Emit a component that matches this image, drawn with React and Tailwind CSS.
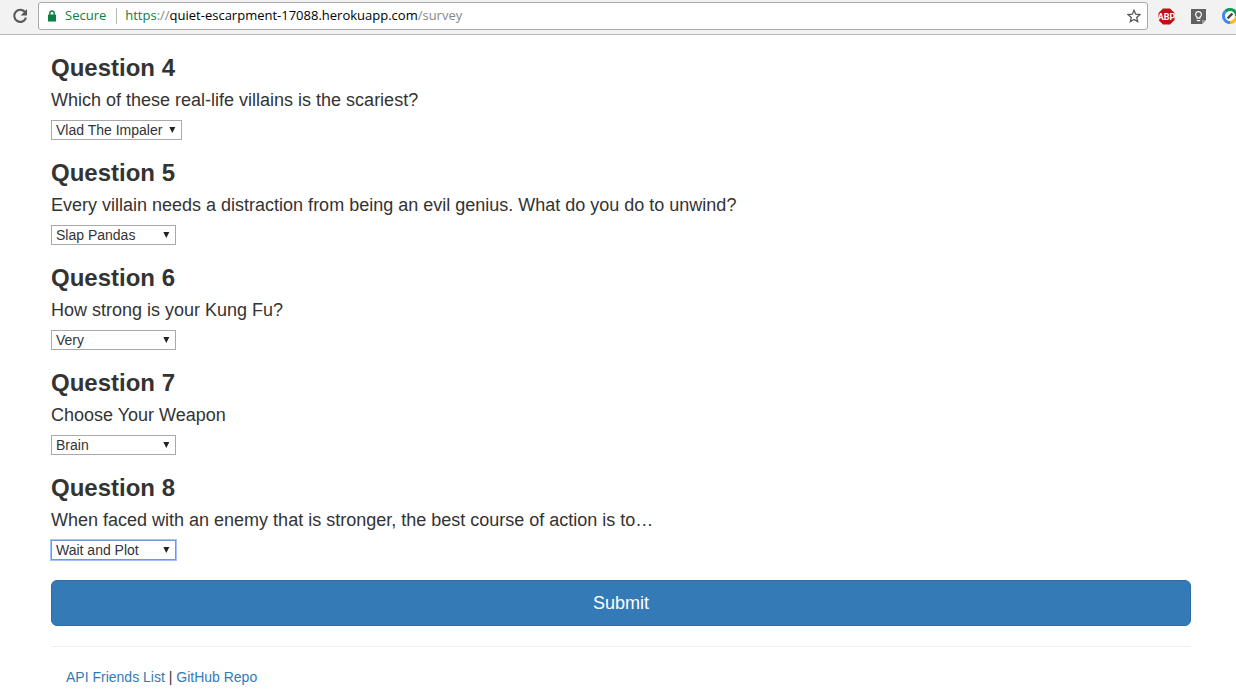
import React from "react";

const questions = [
  { n: 4, text: "Which of these real-life villains is the scariest?", answer: "Vlad The Impaler", width: "w-[131px]" },
  { n: 5, text: "Every villain needs a distraction from being an evil genius. What do you do to unwind?", answer: "Slap Pandas", width: "w-[125px]" },
  { n: 6, text: "How strong is your Kung Fu?", answer: "Very", width: "w-[125px]" },
  { n: 7, text: "Choose Your Weapon", answer: "Brain", width: "w-[125px]" },
  { n: 8, text: "When faced with an enemy that is stronger, the best course of action is to…", answer: "Wait and Plot", width: "w-[125px]", active: true },
];

function BrowserBar() {
  return (
    <header className="flex h-[35px] items-start overflow-hidden border-b border-[#b6b6b6] bg-[#f2f2f2] pt-[2px] pl-3 font-['Open_Sans',sans-serif] text-[13px]">
      <button type="button" aria-label="Reload" className="mr-[10px] flex h-7 w-4 shrink-0 items-center">
        <svg width="16" height="16" viewBox="0 0 16 16" fill="none">
          <path d="M13.2 4.4A6 6 0 1 0 14 9.6" stroke="#5a5a5a" strokeWidth="2.1" />
          <path d="M15 1v6.4H8.6z" fill="#5a5a5a" />
        </svg>
      </button>
      <div className="flex h-7 min-w-0 flex-1 items-center rounded-[3px] border border-[#a9a9a9] bg-white pr-[6px] pl-[9px]">
        <svg className="shrink-0" width="8" height="12" viewBox="0 0 8 12" fill="none">
          <path d="M1.8 5V3.2a2.2 2.2 0 0 1 4.4 0V5" stroke="#0b8043" strokeWidth="1.4" />
          <rect y="4.5" width="8" height="7" rx="0.6" fill="#0b8043" />
        </svg>
        <span className="ml-[9px] text-[#0b8043]">Secure</span>
        <span className="mr-2 ml-[10px] h-4 w-px shrink-0 bg-[#b5b5b5]" />
        <span className="min-w-0 flex-1 truncate text-black">
          <span className="text-[#0b8043]">https</span>
          <span className="text-[#888]">://</span>
          quiet-escarpment-17088.herokuapp.com
          <span className="text-[#888]">/survey</span>
        </span>
        <button type="button" aria-label="Bookmark this page" className="shrink-0">
          <svg width="14" height="14" viewBox="0 0 14 14" fill="none">
            <path d="M7 1.3l1.7 3.9 4.2.4-3.2 2.8 1 4.2L7 10.4l-3.7 2.2 1-4.2L1.1 5.6l4.2-.4z" stroke="#5a5a5a" strokeWidth="1.3" />
          </svg>
        </button>
      </div>
      <div className="-mr-[2px] ml-[10px] flex h-7 shrink-0 items-center gap-4">
        <svg width="17" height="17" viewBox="0 0 17 17">
          <path d="M5 0.5h7L16.5 5v7L12 16.5H5L0.5 12V5z" fill="#c70d12" />
          <text x="8.5" y="11.7" textAnchor="middle" fontSize="9" fontWeight="700" fontFamily="Liberation Sans Narrow, Roboto, sans-serif" fill="#fff">ABP</text>
        </svg>
        <svg width="15" height="15" viewBox="0 0 15 15" fill="none">
          <path d="M0 0h15v11l-4 4H0z" fill="#616161" />
          <path d="M11 15v-4h4z" fill="#9a9a9a" />
          <path d="M6.1 9.2V8a2.9 2.9 0 1 1 2.8 0V9.2z" stroke="#fff" strokeWidth="1.2" />
          <path d="M5.8 11.6h3.4" stroke="#fff" strokeWidth="1.2" />
        </svg>
        <svg width="16" height="16" viewBox="0 0 16 16" fill="none">
          <circle cx="8" cy="8" r="5" fill="#fff" />
          <path d="M8 14.5A6.5 6.5 0 0 1 3.4 3.4" stroke="#4285f4" strokeWidth="3" />
          <path d="M3.4 3.4A6.5 6.5 0 0 1 14.5 8" stroke="#0f9d58" strokeWidth="3" />
          <path d="M14.5 8A6.5 6.5 0 0 1 8 14.5" stroke="#fbbc05" strokeWidth="3" />
          <path d="M5.6 10.4l4.8-4.8" stroke="#444" strokeWidth="2.2" />
        </svg>
      </div>
    </header>
  );
}

function Question({ n, text, answer, width, active }) {
  return (
    <section className="mb-5">
      <h3 className="mb-[10px] text-[24px] leading-[25px] font-bold">Question {n}</h3>
      <label htmlFor={`q${n}`} className="mb-[10px] block text-[18px] leading-5">{text}</label>
      <div className={`grid h-5 items-center ${width}`}>
        <select
          id={`q${n}`}
          defaultValue={answer}
          className={`col-start-1 row-start-1 h-5 w-full appearance-none border bg-white pl-1 text-[14px] leading-[18px] outline-none ${active ? "border-[#6f97dc] ring-1 ring-[#a3c3fa]" : "border-[#a9a9a9]"}`}
        >
          <option>{answer}</option>
        </select>
        <svg className="pointer-events-none col-start-1 row-start-1 mr-[6px] justify-self-end" width="7" height="6" viewBox="0 0 7 6">
          <path d="M0.3 0h6L3.3 6z" fill="#222" />
        </svg>
      </div>
    </section>
  );
}

export default function App() {
  return (
    <div className="bg-white font-['Liberation_Sans',Arial,sans-serif] text-[#333]">
      <BrowserBar />
      <main className="pt-5 pr-[45px] pl-[51px]">
        <form onSubmit={(e) => e.preventDefault()}>
          {questions.map((q) => (
            <Question key={q.n} {...q} />
          ))}
          <button type="submit" className="h-[46px] w-full rounded-md border border-[#2e6da4] bg-[#337ab7] text-[18px] leading-6 text-white">
            Submit
          </button>
        </form>
        <hr className="mt-5 border-[#eee]" />
        <footer className="px-[15px] pt-5 text-[14px] leading-5">
          <a href="#api" className="text-[#337ab7]">API Friends List</a> |{" "}
          <a href="#repo" className="text-[#337ab7]">GitHub Repo</a>
        </footer>
      </main>
    </div>
  );
}
